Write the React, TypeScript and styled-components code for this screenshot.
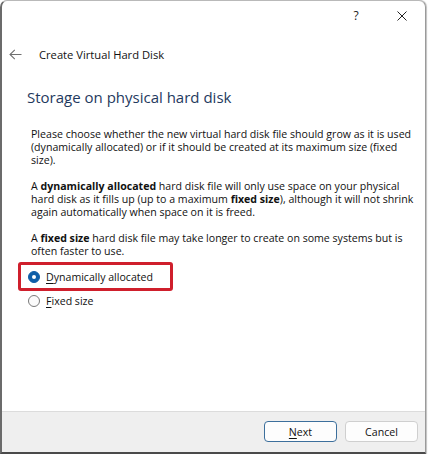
import React from "react";
import styled, { createGlobalStyle } from "styled-components";

const Global = createGlobalStyle`
  html, body { margin: 0; padding: 0; background: #ffffff; }
  body { font-family: "Open Sans", "Noto Sans", sans-serif; }
  * { box-sizing: border-box; }
`;

const Window = styled.div`
  width: 426px;
  height: 454px;
  display: flex;
  flex-direction: column;
  background: #ffffff;
  border-left: 2px solid #6b6b6b;
  border-top: 1px solid #b9b9b9;
  border-right: 1px solid #9a9a9a;
  border-bottom: 2px solid #4a4a4a;
  border-radius: 7px 7px 0 0;
  overflow: hidden;
  color: #1a1a1a;
  box-shadow: 1px 0 1px rgba(0, 0, 0, 0.25);
`;

const TitleBar = styled.div`
  height: 29px;
  display: flex;
  justify-content: flex-end;
  align-items: stretch;
`;

const CaptionButton = styled.div`
  width: 46px;
  display: flex;
  align-items: center;
  justify-content: center;
  font-family: "Open Sans", sans-serif;
  font-size: 12px;
  color: #222;
`;

const NavRow = styled.div`
  height: 48px;
  display: flex;
  align-items: center;
  padding-left: 7px;
  gap: 17px;
`;

const NavTitle = styled.div`
  font-size: 11.2px;
  color: #111;
`;

const Heading = styled.h1`
  margin: 9px 0 0 25px;
  font-weight: 400;
  font-size: 15px;
  line-height: 20px;
  color: #1f3a5e;
`;

const Body = styled.div`
  flex: 1;
  padding: 21px 8px 0 29px;
  display: flex;
  flex-direction: column;
`;

const Para = styled.p`
  margin: 0 0 13px 0;
  font-size: 10.6px;
  line-height: 13px;
  color: #111;
  white-space: nowrap;
  b { font-weight: 700; }
`;

const Options = styled.div`
  display: flex;
  flex-direction: column;
  margin-left: -13px;
  margin-top: -9px;
`;

const OptionRow = styled.label<{ $highlight?: boolean }>`
  display: flex;
  align-items: center;
  gap: 6px;
  width: 155px;
  height: 29px;
  padding-left: 7px;
  border: 3px solid ${(p) => (p.$highlight ? "#cf1f2c" : "transparent")};
  border-radius: 3px;
  font-size: 10.6px;
  color: #111;
  & + & { margin-top: -5px; }
  u { text-decoration: underline; text-underline-offset: 2px; }
`;

const Radio = styled.span<{ $checked?: boolean }>`
  width: 12px;
  height: 12px;
  border-radius: 50%;
  display: inline-flex;
  align-items: center;
  justify-content: center;
  background: ${(p) => (p.$checked ? "#0f5ea8" : "#fbfbfb")};
  border: 1px solid ${(p) => (p.$checked ? "#0f5ea8" : "#7a7a7a")};
  &::after {
    content: "";
    width: 4px;
    height: 4px;
    border-radius: 50%;
    background: #ffffff;
    display: ${(p) => (p.$checked ? "block" : "none")};
  }
`;

const Footer = styled.div`
  height: 41px;
  border-top: 1px solid #dcdcdc;
  background: #efefef;
  display: flex;
  justify-content: flex-end;
  align-items: center;
  padding-right: 7px;
  padding-bottom: 1px;
  gap: 8px;
`;

const Button = styled.button<{ $primary?: boolean }>`
  width: 73px;
  height: 21px;
  font-family: "Open Sans", sans-serif;
  font-size: 10.6px;
  color: #111;
  background: #fdfdfd;
  border: 1px solid ${(p) => (p.$primary ? "#3c6f9c" : "#cfcfcf")};
  border-radius: 4px;
  padding: 0;
  u { text-decoration: underline; text-underline-offset: 2px; }
`;

const BackArrow = () => (
  <svg width="13" height="11" viewBox="0 0 13 11" fill="none" stroke="#707070" strokeWidth="1.1">
    <path d="M12.5 5.5H1M5.8 0.8L1 5.5l4.8 4.7" />
  </svg>
);

const CloseIcon = () => (
  <svg width="10" height="10" viewBox="0 0 10 10" fill="none" stroke="#222" strokeWidth="1">
    <path d="M0.5 0.5l9 9M9.5 0.5l-9 9" />
  </svg>
);

export default function App() {
  return (
    <>
      <Global />
      <Window>
        <TitleBar>
          <CaptionButton>?</CaptionButton>
          <CaptionButton>
            <CloseIcon />
          </CaptionButton>
        </TitleBar>
        <NavRow>
          <BackArrow />
          <NavTitle>Create Virtual Hard Disk</NavTitle>
        </NavRow>
        <Heading>Storage on physical hard disk</Heading>
        <Body>
          <Para>
            Please choose whether the new virtual hard disk file should grow as it is used
            <br />
            (dynamically allocated) or if it should be created at its maximum size (fixed
            <br />
            size).
          </Para>
          <Para>
            A <b>dynamically allocated</b> hard disk file will only use space on your physical
            <br />
            hard disk as it fills up (up to a maximum <b>fixed size</b>), although it will not shrink
            <br />
            again automatically when space on it is freed.
          </Para>
          <Para>
            A <b>fixed size</b> hard disk file may take longer to create on some systems but is
            <br />
            often faster to use.
          </Para>
          <Options>
            <OptionRow $highlight>
              <Radio $checked />
              <span>
                <u>D</u>ynamically allocated
              </span>
            </OptionRow>
            <OptionRow>
              <Radio />
              <span>
                <u>F</u>ixed size
              </span>
            </OptionRow>
          </Options>
        </Body>
        <Footer>
          <Button $primary>
            <u>N</u>ext
          </Button>
          <Button>Cancel</Button>
        </Footer>
      </Window>
    </>
  );
}
